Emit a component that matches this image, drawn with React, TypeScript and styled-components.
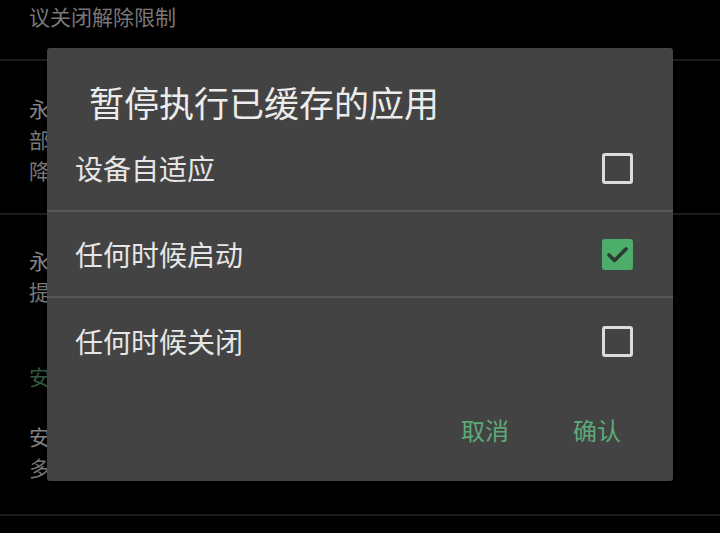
import React, { useState } from 'react';
import styled, { createGlobalStyle } from 'styled-components';

const GlobalStyle = createGlobalStyle`
  html, body {
    margin: 0;
    padding: 0;
    background: #000;
  }
  * {
    box-sizing: border-box;
  }
`;

const Screen = styled.div`
  position: relative;
  width: 720px;
  height: 533px;
  overflow: hidden;
  background: #000;
  font-family: 'Noto Sans CJK SC', 'Noto Sans', sans-serif;
`;

const SettingsList = styled.div`
  display: flex;
  flex-direction: column;
`;

const PrefRow = styled.div<{ $top?: number; $bottom?: number; $divider?: boolean }>`
  display: flex;
  flex-direction: column;
  padding: ${(p) => (p.$top !== undefined ? p.$top : 32)}px 29px
    ${(p) => (p.$bottom !== undefined ? p.$bottom : 27)}px;
  border-bottom: ${(p) => (p.$divider ? '2px solid #1c1c1c' : 'none')};
`;

const PrefTitle = styled.div`
  font-size: 21px;
  line-height: 31px;
  color: #848484;
  white-space: nowrap;
`;

const PrefSummary = styled.div`
  font-size: 21px;
  line-height: 31px;
  color: #787878;
  white-space: nowrap;
`;

const CategoryHeader = styled.div`
  padding: 27px 29px 0;
  font-size: 21px;
  line-height: 31px;
  color: #34573f;
`;

const Dialog = styled.div`
  position: absolute;
  top: 48px;
  left: 47px;
  width: 626px;
  background: #434343;
  border-radius: 3px;
  display: flex;
  flex-direction: column;
`;

const DialogTitle = styled.div`
  padding: 35px 0 5px 42px;
  font-size: 35px;
  line-height: 38px;
  color: #ececec;
`;

const OptionRow = styled.label<{ $divider?: boolean }>`
  display: flex;
  align-items: center;
  justify-content: space-between;
  height: 86px;
  padding: 0 40px 0 28px;
  border-bottom: ${(p) => (p.$divider ? '2px solid #585858' : 'none')};
  cursor: pointer;
`;

const OptionLabel = styled.span`
  font-size: 28px;
  line-height: 36px;
  color: #e6e6e6;
`;

const Box = styled.span<{ $checked: boolean }>`
  display: flex;
  align-items: center;
  justify-content: center;
  width: 31px;
  height: 31px;
  border-radius: 3px;
  border: ${(p) => (p.$checked ? 'none' : '3px solid #dcdcdc')};
  background: ${(p) => (p.$checked ? '#4dad6b' : 'transparent')};
`;

const Footer = styled.div`
  display: flex;
  align-items: center;
  justify-content: flex-end;
  gap: 32px;
  height: 97px;
  padding: 0 36px 5px 0;
`;

const TextButton = styled.button`
  border: none;
  background: transparent;
  padding: 0 16px;
  font-family: 'Noto Sans CJK SC', 'Noto Sans', sans-serif;
  font-size: 24px;
  line-height: 32px;
  color: #5daa78;
  cursor: pointer;
`;

const Checkbox: React.FC<{ checked: boolean }> = ({ checked }) => (
  <Box $checked={checked}>
    {checked && (
      <svg width="31" height="31" viewBox="0 0 31 31">
        <path
          d="M7 16 L12.5 21.5 L24 10"
          fill="none"
          stroke="#2c3a31"
          strokeWidth="3.6"
          strokeLinecap="round"
          strokeLinejoin="round"
        />
      </svg>
    )}
  </Box>
);

const options = ['设备自适应', '任何时候启动', '任何时候关闭'];

const App: React.FC = () => {
  const [checked, setChecked] = useState<boolean[]>([false, true, false]);

  const toggle = (i: number) =>
    setChecked((prev) => prev.map((v, j) => (j === i ? !v : v)));

  return (
    <Screen>
      <GlobalStyle />
      <SettingsList>
        <PrefRow $top={1} $divider>
          <PrefSummary>议关闭解除限制</PrefSummary>
        </PrefRow>
        <PrefRow $divider>
          <PrefTitle>永久保持后台运行</PrefTitle>
          <PrefSummary>部分应用在后台时会被系统冻结</PrefSummary>
          <PrefSummary>降低耗电但可能影响消息推送</PrefSummary>
        </PrefRow>
        <PrefRow $top={30}>
          <PrefTitle>永久显示通知</PrefTitle>
          <PrefSummary>提醒您应用正在后台运行</PrefSummary>
        </PrefRow>
        <CategoryHeader>安全与隐私</CategoryHeader>
        <PrefRow $top={29} $bottom={31} $divider>
          <PrefTitle>安全模式</PrefTitle>
          <PrefSummary>多用户环境下保护应用数据</PrefSummary>
        </PrefRow>
      </SettingsList>

      <Dialog>
        <DialogTitle>暂停执行已缓存的应用</DialogTitle>
        {options.map((label, i) => (
          <OptionRow
            key={label}
            $divider={i < options.length - 1}
            onClick={() => toggle(i)}
          >
            <OptionLabel>{label}</OptionLabel>
            <Checkbox checked={checked[i]} />
          </OptionRow>
        ))}
        <Footer>
          <TextButton>取消</TextButton>
          <TextButton>确认</TextButton>
        </Footer>
      </Dialog>
    </Screen>
  );
};

export default App;
